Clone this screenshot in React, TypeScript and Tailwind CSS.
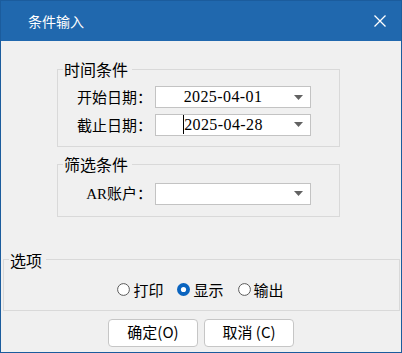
import React from 'react';

function Group({ title, className, children }: { title: string; className: string; children: React.ReactNode }) {
  return (
    <fieldset className={`border border-[#d9d9d9] ${className}`}>
      <legend className="ml-[5px] pl-[1px] pr-[4px] text-[16px] leading-[18px]">{title}</legend>
      {children}
    </fieldset>
  );
}

function Arrow() {
  return (
    <svg width="9" height="5" viewBox="0 0 9 5">
      <path d="M0 0H9L4.5 5Z" fill="#626262" />
    </svg>
  );
}

function Combo({ value, caret }: { value?: string; caret?: boolean }) {
  return (
    <div className="ml-[3px] w-[156px] h-[22px] border border-[#c3c3c3] bg-white flex items-center">
      <div className="flex-1 flex items-center justify-center font-['Liberation_Serif',serif] text-[16px] tracking-[0.4px] leading-[20px]">
        {caret && <span className="inline-block w-px h-[19px] bg-black" />}
        {value}
      </div>
      <div className="w-[20px] flex justify-center pr-[3px]">
        <Arrow />
      </div>
    </div>
  );
}

function Radio({ label, checked }: { label: string; checked?: boolean }) {
  return (
    <div className="flex items-center gap-[3px]">
      <svg width="13" height="13" viewBox="0 0 13 13">
        {checked ? (
          <>
            <circle cx="6.5" cy="6.5" r="6.5" fill="#0a64bf" />
            <circle cx="6.5" cy="6.5" r="2.6" fill="white" />
          </>
        ) : (
          <circle cx="6.5" cy="6.5" r="5.9" fill="white" stroke="#5a5a5a" strokeWidth="1" />
        )}
      </svg>
      <span>{label}</span>
    </div>
  );
}

export default function App() {
  return (
    <div className="w-[402px] h-[353px] bg-[#f0f0f0] border border-[#1b5c9d] flex flex-col font-['Noto_Sans_CJK_SC',sans-serif] text-black">
      <div className="h-[40px] shrink-0 bg-[#2068ae] flex items-center justify-between pl-[27px] pr-[15px] text-white text-[14px]">
        <span>条件输入</span>
        <svg width="12" height="12" viewBox="0 0 12 12">
          <path d="M0.5 0.5L11.5 11.5M11.5 0.5L0.5 11.5" stroke="white" strokeWidth="1.3" />
        </svg>
      </div>

      <Group title="时间条件" className="ml-[56px] w-[283px] mt-[19px] pt-[8px] pb-[10px]">
        <div className="flex flex-col gap-[5px] text-[15px]">
          <div className="flex items-center">
            <span className="w-[94px] text-right">开始日期：</span>
            <Combo value="2025-04-01" />
          </div>
          <div className="flex items-center">
            <span className="w-[94px] text-right">截止日期：</span>
            <Combo value="2025-04-28" caret />
          </div>
        </div>
      </Group>

      <Group title="筛选条件" className="ml-[56px] w-[283px] mt-[8px] pt-[9px] pb-[10px]">
        <div className="flex items-center text-[15px]">
          <span className="w-[94px] text-right">
            <span className="font-['Liberation_Serif',serif]">AR</span>账户：
          </span>
          <Combo />
        </div>
      </Group>

      <Group title="选项" className="ml-[2px] w-[397px] mt-[34px] pt-[11px] pb-[10px]">
        <div className="flex justify-center items-center gap-[14px] text-[15px] leading-[20px] pr-[2px]">
          <Radio label="打印" />
          <Radio label="显示" checked />
          <Radio label="输出" />
        </div>
      </Group>

      <div className="mt-[8px] flex justify-center gap-[6px] text-[15px]">
        <button className="w-[90px] h-[28px] bg-white border border-[#c6c6c6] rounded-[4px]">确定(O)</button>
        <button className="w-[90px] h-[28px] bg-white border border-[#c6c6c6] rounded-[4px]">取消 (C)</button>
      </div>
    </div>
  );
}
